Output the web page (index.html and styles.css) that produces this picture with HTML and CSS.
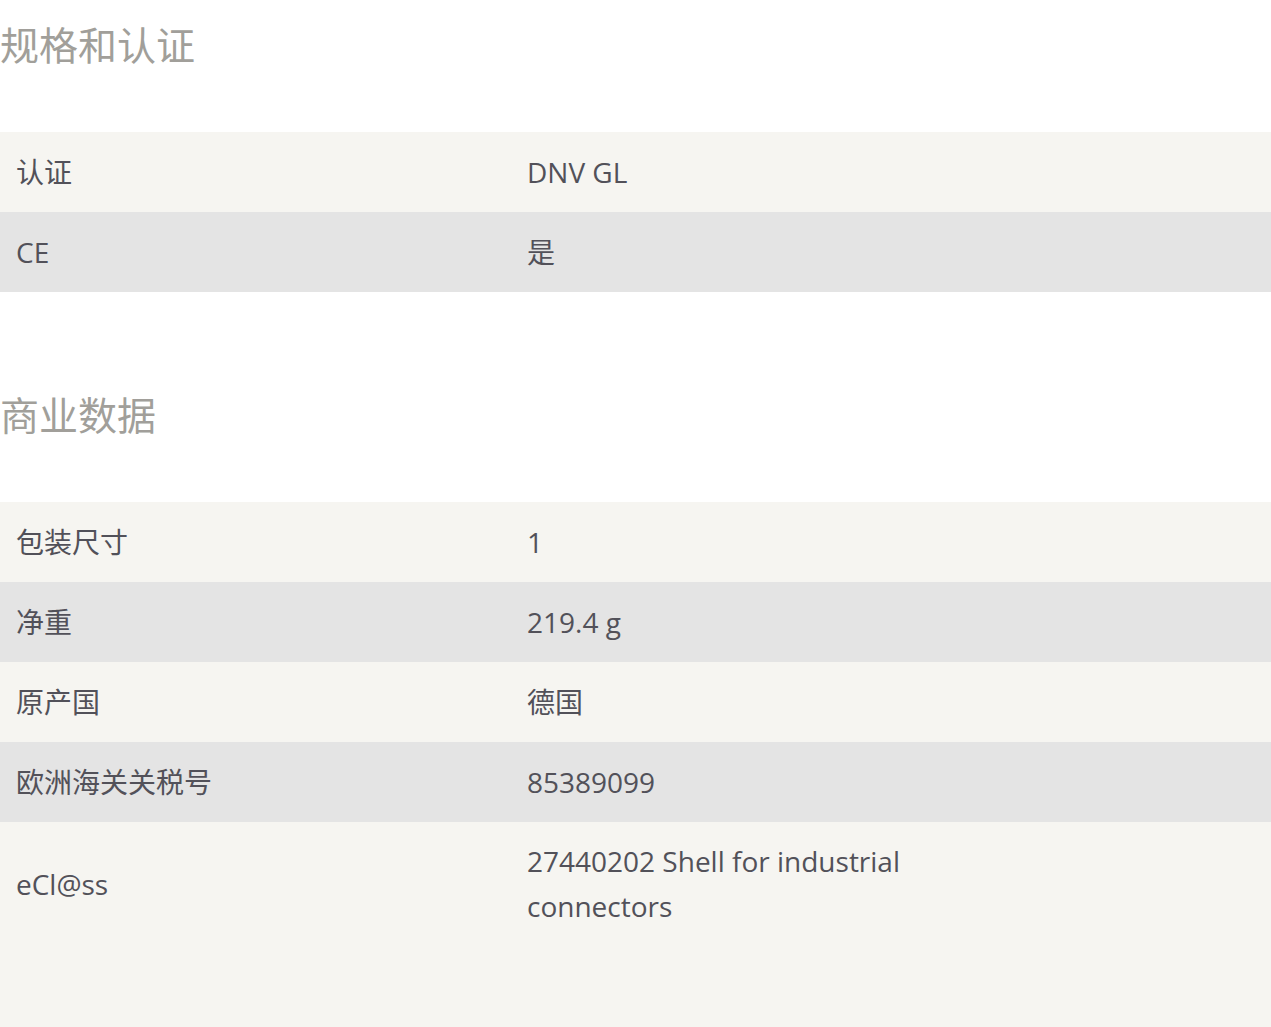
FILE: index.html
```html
<!DOCTYPE html>
<html lang="zh-CN">
<head>
<meta charset="utf-8">
<title>规格和认证</title>
<link rel="stylesheet" href="styles.css">
</head>
<body>
<section class="section">
  <h2 class="heading">规格和认证</h2>
  <div class="table">
    <div class="row light"><div class="label">认证</div><div class="value">DNV GL</div></div>
    <div class="row dark"><div class="label">CE</div><div class="value">是</div></div>
  </div>
</section>
<section class="section second">
  <h2 class="heading">商业数据</h2>
  <div class="table">
    <div class="row light"><div class="label">包装尺寸</div><div class="value">1</div></div>
    <div class="row dark"><div class="label">净重</div><div class="value">219.4 g</div></div>
    <div class="row light"><div class="label">原产国</div><div class="value">德国</div></div>
    <div class="row dark"><div class="label">欧洲海关关税号</div><div class="value">85389099</div></div>
    <div class="row light"><div class="label">eCl@ss</div><div class="value narrow">27440202 Shell for industrial connectors</div></div>
    <div class="tail light"></div>
  </div>
</section>
</body>
</html>
```

FILE: styles.css
```css
html, body {
  margin: 0;
  padding: 0;
  background: #ffffff;
}
body {
  font-family: "Open Sans", "Noto Sans CJK SC", sans-serif;
  color: #525159;
}
.section {
  display: flex;
  flex-direction: column;
}
.second {
  margin-top: 78px;
}
.heading {
  margin: 0 0 42px 0;
  font-size: 39px;
  font-weight: 400;
  line-height: 90px;
  height: 90px;
  color: #a19f9a;
}
.table {
  display: flex;
  flex-direction: column;
}
.row {
  display: flex;
  align-items: center;
  min-height: 80px;
  box-sizing: border-box;
  padding: 17px 0;
  font-size: 28px;
  line-height: 45px;
}
.light { background: #f6f5f1; }
.dark { background: #e4e4e4; }
.label {
  width: 511px;
  flex: none;
  padding-left: 16px;
  box-sizing: border-box;
}
.value {
  padding-left: 16px;
}
.narrow {
  max-width: 400px;
}
.tail {
  height: 90px;
}
```
